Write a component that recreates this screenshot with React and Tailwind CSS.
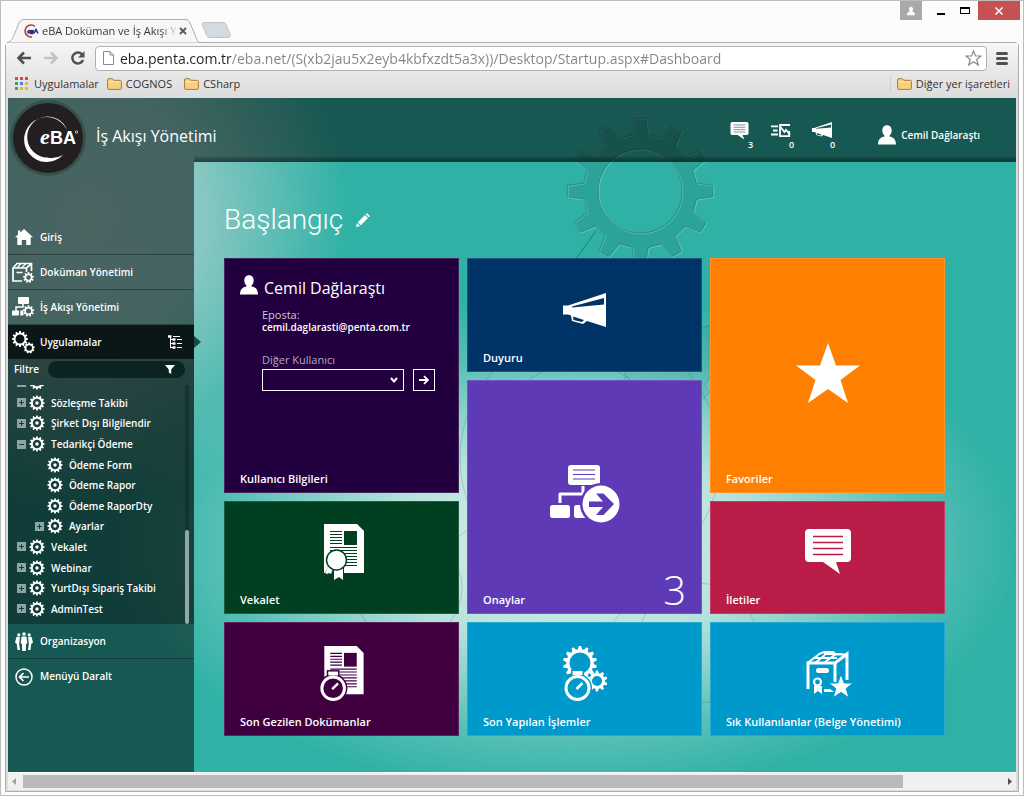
import React from "react";

function gearPath(cx, cy, teeth, outer, inner, phase = 0, top = 0.2, base = 0.32) {
  const step = (Math.PI * 2) / teeth;
  const pt = (r, a) =>
    (cx + r * Math.sin(a)).toFixed(2) + " " + (cy - r * Math.cos(a)).toFixed(2);
  let d = "";
  for (let i = 0; i < teeth; i++) {
    const a = i * step + phase;
    d += (i === 0 ? "M" : "L") + pt(inner, a - step * base);
    d += "L" + pt(outer, a - step * top) + "L" + pt(outer, a + step * top);
    d += "L" + pt(inner, a + step * base);
  }
  return d + "Z";
}

function circlePath(cx, cy, r) {
  return `M${cx - r} ${cy}a${r} ${r} 0 1 0 ${r * 2} 0a${r} ${r} 0 1 0 ${-r * 2} 0Z`;
}

/* ---------- icons ---------- */

function PersonIcon({ className }) {
  return (
    <svg className={className} viewBox="0 0 18 20" fill="currentColor" aria-hidden="true">
      <path d="M9 0.3c2.9 0 4.7 2.2 4.7 5.3 0 2-.9 4-2.2 5.1v.7c2.6.4 6.3 1.5 6.5 8.1H0c.2-6.6 3.9-7.7 6.5-8.1v-.7C5.2 9.6 4.3 7.6 4.3 5.6 4.3 2.5 6.1.3 9 .3Z" />
    </svg>
  );
}

function ChatIcon({ className, line }) {
  return (
    <svg className={className} viewBox="0 0 46 46" aria-hidden="true">
      <path
        fill="currentColor"
        d="M4 0h38a4 4 0 0 1 4 4v25a4 4 0 0 1-4 4H31l4 12-17-12H4a4 4 0 0 1-4-4V4a4 4 0 0 1 4-4Z"
      />
      <path d="M8 7.5h30M8 13.5h30M8 19.5h30M8 25.5h30" stroke={line} strokeWidth="1.5" />
    </svg>
  );
}

function SendIcon({ className }) {
  return (
    <svg className={className} viewBox="0 0 20 14" fill="none" stroke="currentColor" strokeWidth="1.8" aria-hidden="true">
      <path d="M0 2.3h7M2 6.5h4.5M0 10.5h7" />
      <path d="M18.2 7v5.2H9V1h10" />
      <path d="M9.5 3l4 5 1.5-2 4 4.500" />
    </svg>
  );
}

function MegaphoneIcon({ className, hole }) {
  return (
    <svg className={className} viewBox="0 0 43 34" aria-hidden="true">
      <path fill="currentColor" d="M0 12.5h5L43 0v34l-19-6-4 3-11-3-1-5.5-3-1H0Z" />
      <path fill={hole} d="M9 13.5 41 5v6.5L9 14.5ZM10 23.5l11 3.5-2 2-8.5-2Z" />
    </svg>
  );
}

function HomeIcon({ className }) {
  return (
    <svg className={className} viewBox="0 0 18 16" fill="currentColor" aria-hidden="true">
      <path d="M9 0 18 8.2h-2.3V16h-4.5v-5H6.8v5H2.3V8.2H0L3 5.5V1.5h2.3v2Z" />
    </svg>
  );
}

function BoxGearIcon({ className }) {
  return (
    <svg className={className} viewBox="0 0 22 21" fill="none" stroke="currentColor" aria-hidden="true">
      <path strokeWidth="1.7" d="M10 19H1V6l4-4.5h14.5V9M1 6h13.5l5-4.5M14.5 6v4" />
      <path strokeWidth="1.3" d="M5 6l4-4.5M9.5 6l4.5-4.5M4.5 10.5h6" />
      <path fill="currentColor" fillRule="evenodd" stroke="none" d={gearPath(16.5, 15.5, 9, 5.5, 4) + circlePath(16.5, 15.5, 2.3)} />
    </svg>
  );
}

function FlowGearIcon({ className }) {
  return (
    <svg className={className} viewBox="0 0 22 20" fill="currentColor" aria-hidden="true">
      <rect x="6" y="0" width="11" height="7" rx="1" />
      <path d="M11 7v3H4v4" fill="none" stroke="currentColor" strokeWidth="1.5" />
      <rect x="0" y="13.5" width="7" height="5" rx=".8" />
      <rect x="8.3" y="13.5" width="3" height="5" />
      <path fillRule="evenodd" d={gearPath(16.5, 14, 9, 5.8, 4.2) + circlePath(16.5, 14, 2.5)} />
    </svg>
  );
}

function GearsIcon({ className }) {
  return (
    <svg className={className} viewBox="0 0 23 23" fill="currentColor" fillRule="evenodd" aria-hidden="true">
      <path d={gearPath(8, 8, 12, 8, 6.4) + circlePath(8, 8, 4.5)} />
      <path d={gearPath(17.2, 17, 9, 5.5, 4.5) + circlePath(17.2, 17, 2.8)} />
    </svg>
  );
}

function GearIcon({ className }) {
  return (
    <svg className={className} viewBox="0 0 16 16" fill="currentColor" aria-hidden="true">
      <path fillRule="evenodd" d={gearPath(8, 8, 12, 7.6, 6.1) + circlePath(8, 8, 4.2)} />
      <circle cx="8" cy="8" r="1.7" />
    </svg>
  );
}

function TreeIcon({ className }) {
  return (
    <svg className={className} viewBox="0 0 14 14" fill="none" stroke="currentColor" aria-hidden="true">
      <path strokeWidth="1" d="M2.5 2v11M2.5 4.5H5M2.5 8.5H5M2.5 12.5H5" />
      <path strokeWidth="2.4" d="M0 1.5h3.5M4.5 4.5h3M4.5 8.5h3M4.5 12.5h3" />
      <path strokeWidth="1.2" d="M5 1.5h7M9 4.5h5M9 8.5h5M9 12.5h5" />
    </svg>
  );
}

function PeopleIcon({ className }) {
  return (
    <svg className={className} viewBox="0 0 18 19" fill="currentColor" aria-hidden="true">
      <circle cx="9" cy="2" r="1.8" />
      <path d="M6.500 4.500h5l.8 7-1.300.3L10.800 19H7.200L7 11.800l-1.300-.3Z" />
      <circle cx="3.800" cy="2.800" r="1.500" />
      <path d="M1.500 4.800h3.400L4.200 12.500l.8 5.500H2.500L1.800 12 0 10.500Z" />
      <circle cx="14.200" cy="2.800" r="1.500" />
      <path d="M16.500 4.800h-3.400L13.800 12.500l-.8 5.500h2.500l.7-6 1.800-1.500Z" />
    </svg>
  );
}

function BackCircleIcon({ className }) {
  return (
    <svg className={className} viewBox="0 0 18 18" fill="none" stroke="currentColor" strokeWidth="1.5" aria-hidden="true">
      <circle cx="9" cy="9" r="8" />
      <path strokeWidth="1.7" d="M14 9H5M8.5 5 4.5 9l4 4" />
    </svg>
  );
}

function Stopwatch({ x, y, r, ring }) {
  return (
    <g>
      <circle cx={x} cy={y} r={r + 1.5} fill={ring} />
      <rect x={x - 6.5} y={y - r - 5.5} width="13" height="6" fill={ring} />
      <rect x={x - 5} y={y - r - 4} width="10" height="4" fill="white" />
      <circle cx={x} cy={y} r={r - 1.5} fill={ring} stroke="white" strokeWidth="3" />
      <path d={`M${x - 1} ${y + 1}l6-6`} stroke="white" strokeWidth="2.5" />
    </g>
  );
}

function Paper({ bg }) {
  return (
    <g>
      <path fill="white" d="M4 0h33l7 7v42H4Z" />
      <path stroke={bg} strokeWidth="1.2" d="M10 7.5h12M10 10.5h12M10 13.5h12M10 16.5h12M10 19.5h12M10 23.5h27M10 26.5h27M10 29.5h27M10 32.5h27M10 35.5h27M10 38.5h27M10 41.5h27" />
      <rect x="24" y="7" width="13" height="14" fill={bg} />
    </g>
  );
}

function CertificateIcon() {
  const bg = "#004020";
  return (
    <svg className="h-14 w-11" viewBox="0 0 44 56" aria-hidden="true">
      <Paper bg={bg} />
      <path fill={bg} d="M4 50l6-10h14v10Z" />
      <path fill="white" d="M5 49l4-8 4 3-2 6-2-1-2 1ZM14 42h9v14l-4-3-5 3Z" />
      <circle cx="16.5" cy="36" r="10" fill="white" stroke={bg} strokeWidth="1.5" />
    </svg>
  );
}

function RecentDocIcon() {
  return (
    <svg className="h-14 w-11" viewBox="0 0 44 57" aria-hidden="true">
      <Paper bg="#400040" />
      <Stopwatch x={13} y={43} r={13} ring="#400040" />
    </svg>
  );
}

function RecentActionsIcon() {
  return (
    <svg className="h-14 w-11" viewBox="0 0 44 56" aria-hidden="true">
      <path fill="white" fillRule="evenodd" d={gearPath(17, 17, 14, 17, 13.8, 0, 0.16, 0.34) + circlePath(17, 17, 10.5)} />
      <path fill="white" fillRule="evenodd" d={gearPath(34, 35, 10, 10.5, 8, 0, 0.16, 0.34) + circlePath(34, 35, 5)} />
      <Stopwatch x={14.5} y={42} r={13} ring="#0099cc" />
    </svg>
  );
}

function ArchiveStarIcon() {
  return (
    <svg className="h-12 w-12" viewBox="0 0 48 48" fill="none" stroke="white" aria-hidden="true">
      <path strokeWidth="3" d="M4 39V13h27v19M31 13 43 4v26" />
      <path strokeWidth="2" d="M3.5 13 14 5M11 13l10-8M21 12l11-8M14 4.5l6-2.5h9l3 2.5h11" />
      <path strokeWidth="2" d="M9 8h24M20 4h18" />
      <rect x="12" y="18" width="13" height="5" rx="2.5" fill="white" stroke="none" />
      <circle cx="13.5" cy="32" r="3.5" strokeWidth="2.2" />
      <path fill="white" stroke="none" d="M10 36h8v8l-4-3-4 3ZM20 39h6l4 3h-10Z" />
      <path fill="white" stroke="#0099cc" strokeWidth="1" d="m37 24 3.2 9h9l-7 5.6 2.8 9.2-8-5.4-8 5.4 2.8-9.2-7-5.6h9Z" />
    </svg>
  );
}

function ApprovalIcon() {
  const bg = "#5f3ab7";
  return (
    <svg className="h-[60px] w-[70px]" viewBox="0 0 70 60" aria-hidden="true">
      <rect x="18" y="1" width="32" height="20" rx="3" fill="white" />
      <path d="M23 6h22M23 10.5h22M23 15h22" stroke={bg} strokeWidth="1.2" />
      <path d="M33 22v8H10v9" fill="none" stroke="white" strokeWidth="3" strokeLinejoin="round" />
      <rect x="0" y="41" width="20" height="13" rx="2.5" fill="white" />
      <rect x="24" y="41" width="20" height="13" rx="2.5" fill="white" />
      <circle cx="51" cy="40" r="21" fill={bg} />
      <circle cx="51" cy="40" r="18.5" fill="white" />
      <path fill={bg} d="M39 37.5h14l-7-8h7.5L64 40 53.5 51H46l7-8H39Z" />
    </svg>
  );
}

function StarIcon() {
  return (
    <svg className="h-[60px] w-16" viewBox="0 0 64 60" fill="white" aria-hidden="true">
      <path d="m32 0 8 22.5h24L44.5 37 52 60 32 46 12 60l7.5-23L0 22.5h24Z" />
    </svg>
  );
}

function FolderIcon() {
  return (
    <svg className="h-3 w-[15px]" viewBox="0 0 15 12" aria-hidden="true">
      <path d="M.6 2A1.2 1.2 0 0 1 1.8.7h3.6l1.4 1.6h6.4a1.2 1.2 0 0 1 1.2 1.2v6.7a1.2 1.2 0 0 1-1.2 1.2H1.8A1.2 1.2 0 0 1 .6 10.2Z" fill="#f9cf7e" stroke="#a8793a" />
      <path d="M1.2 3.8h12.6" stroke="#fde9bd" />
    </svg>
  );
}

/* ---------- browser chrome ---------- */

function TabStrip() {
  return (
    <div className="flex h-[41px] items-end justify-between">
      <div className="flex items-end">
        <div className="relative -mb-px ml-1.5 flex h-6 w-[194px] items-center gap-[3px] pl-4 pr-3.5">
          <svg className="absolute inset-0 h-full w-full" viewBox="0 0 194 24" preserveAspectRatio="none" aria-hidden="true">
            <path d="M0 23.5C5 22 5 20 7 16L12 4C13.5 1 14.5.5 17 .5H178C181 .5 182 1.5 183 4L189 18C190.5 22 191 23.5 194 23.5" fill="#f6f6f6" stroke="#adadad" />
          </svg>
          <svg className="relative h-4 w-4 shrink-0" viewBox="0 0 16 16" fill="none" aria-hidden="true">
            <path d="M12 3.5A6 6 0 1 0 9 14" stroke="#c0392b" strokeWidth="1.5" />
            <path d="M4.5 9.5c1-2.5 3-2.5 3-1s-3 1.5-2 2M9 7l-1 3.5h1.5L10.5 7M11 10.5 13 6.5l2 4" stroke="#1d2f86" strokeWidth="1.5" />
          </svg>
          <span className="relative flex-1 whitespace-nowrap bg-[linear-gradient(90deg,#333_88%,#ddd)] bg-clip-text text-[11px] leading-4 text-transparent">
            eBA Doküman ve İş Akışı Y
          </span>
          <button type="button" aria-label="Sekmeyi kapat" className="relative shrink-0">
            <svg className="h-2 w-2" viewBox="0 0 8 8" stroke="#555" strokeWidth="1.8" aria-hidden="true">
              <path d="M1 1l6 6M7 1 1 7" />
            </svg>
          </button>
        </div>
        <button type="button" aria-label="Yeni sekme" className="mb-1">
          <svg className="h-4 w-[30px]" viewBox="0 0 30 16" aria-hidden="true">
            <path d="M1 2Q1 .5 3 .5H22Q24 .5 25 2.5L29 12Q30 15.5 27 15.5H9Q6.5 15.5 5.5 13Z" fill="#d5d9e0" stroke="#bfc2c8" />
          </svg>
        </button>
      </div>
      <div className="mr-[3px] flex h-[19px] items-stretch self-start">
        <button type="button" aria-label="Profil" className="mr-2 flex w-[22px] items-center justify-center bg-[#a9a9a9] text-white">
          <PersonIcon className="h-2.5 w-2" />
        </button>
        <button type="button" aria-label="Simge durumuna küçült" className="flex w-[22px] items-center justify-center">
          <span className="mt-1.5 h-0.5 w-2 bg-black" />
        </button>
        <button type="button" aria-label="Ekranı kapla" className="flex w-[26px] items-center justify-center">
          <span className="h-[7px] w-2.5 border border-t-2 border-black" />
        </button>
        <button type="button" aria-label="Kapat" className="flex w-[42px] items-center justify-center bg-[#c75050]">
          <svg className="h-2 w-2" viewBox="0 0 8 8" stroke="white" strokeWidth="1.5" aria-hidden="true">
            <path d="M.5.5l7 7M7.5.5l-7 7" />
          </svg>
        </button>
      </div>
    </div>
  );
}

function AddressBar() {
  return (
    <div className="flex h-[30px] items-center pl-[10px] pr-[10px]">
      <button type="button" aria-label="Geri">
        <svg className="h-3.5 w-4" viewBox="0 0 16 14" fill="none" stroke="#505050" strokeWidth="2.6" aria-hidden="true">
          <path d="M15 7H3M8 1.5 2.5 7 8 12.5" />
        </svg>
      </button>
      <button type="button" aria-label="İleri" className="ml-[11px]">
        <svg className="h-3.5 w-4" viewBox="0 0 16 14" fill="none" stroke="#c4c4c4" strokeWidth="2.6" aria-hidden="true">
          <path d="M1 7h12M8 1.5 13.5 7 8 12.5" />
        </svg>
      </button>
      <button type="button" aria-label="Yenile" className="ml-[11px]">
        <svg className="h-3.5 w-4" viewBox="0 0 16 14" aria-hidden="true">
          <path d="M12 3.3A5.5 5.5 0 1 0 13 9" fill="none" stroke="#505050" strokeWidth="2.5" />
          <path d="M14.5 0v6.5H8Z" fill="#505050" />
        </svg>
      </button>
      <div className="ml-[9px] flex h-[25px] flex-1 items-center rounded-sm border border-[#b0b0b0] bg-white pl-[7px] pr-1">
        <svg className="h-3.5 w-[11px]" viewBox="0 0 11 14" fill="white" stroke="#8a8a8a" aria-hidden="true">
          <path d="M.5.5h6.5l3.5 3.5v9.5H.5ZM7 .5V4h3.5" />
        </svg>
        <input
          type="text"
          aria-label="Adres çubuğu"
          defaultValue="eba.penta.com.tr/eba.net/(S(xb2jau5x2eyb4kbfxzdt5a3x))/Desktop/Startup.aspx#Dashboard"
          className="ml-1.5 h-[22px] min-w-0 flex-1 bg-[linear-gradient(90deg,#222_111px,#838383_111px)] bg-clip-text text-sm text-transparent outline-none"
        />
        <button type="button" aria-label="Yer işareti ekle">
          <svg className="h-4 w-[17px]" viewBox="0 0 17 16" fill="white" stroke="#8a8a8a" strokeWidth="1.2" aria-hidden="true">
            <path d="m8.5 1 2 5h5.5l-4.3 3.5 1.6 5.5-4.8-3.3L3.7 15l1.6-5.5L1 6h5.5Z" />
          </svg>
        </button>
      </div>
      <button type="button" aria-label="Menü" className="ml-[9px] flex flex-col gap-0.5">
        <span className="h-[3px] w-3 rounded-sm bg-[#505050]" />
        <span className="h-[3px] w-3 rounded-sm bg-[#505050]" />
        <span className="h-[3px] w-3 rounded-sm bg-[#505050]" />
      </button>
    </div>
  );
}

function AppsGrid() {
  const colors = ["#e2453c", "#e2453c", "#e2453c", "#3aa757", "#4a80f0", "#f2b90f", "#3aa757", "#f2b90f", "#f2b90f"];
  return (
    <svg className="h-[13px] w-[13px]" viewBox="0 0 13 13" aria-hidden="true">
      {colors.map((c, i) => (
        <rect key={i} x={(i % 3) * 5} y={Math.floor(i / 3) * 5} width="3" height="3" fill={c} />
      ))}
    </svg>
  );
}

function BookmarksBar() {
  return (
    <nav className="flex h-[25px] items-center pb-1 pl-[9px] pr-2 text-[11px] leading-4 text-[#333]">
      <a href="#apps" className="flex items-center gap-1.5"><AppsGrid />Uygulamalar</a>
      <a href="#cognos" className="ml-2 flex items-center gap-1"><FolderIcon />COGNOS</a>
      <a href="#csharp" className="ml-3 flex items-center gap-1"><FolderIcon />CSharp</a>
      <a href="#other" className="ml-auto flex items-center gap-1 border-l border-[#cfcfcf] pl-1.5"><FolderIcon />Diğer yer işaretleri</a>
    </nav>
  );
}

/* ---------- application ---------- */

function Backdrop() {
  const gear = gearPath(632, 93, 12, 73, 57, 0, 0.15, 0.27) + circlePath(632, 93, 42);
  return (
    <svg className="absolute left-0 top-0 h-[675px] w-[1008px]" viewBox="0 0 1008 675" fill="none" aria-hidden="true">
      <g>
        <path d={gear} transform="translate(1 1)" stroke="white" strokeOpacity=".25" />
        <path d={gear} fill="black" fillRule="evenodd" fillOpacity=".08" stroke="black" strokeOpacity=".15" />
        <path d="M588 133 560 172" stroke="black" strokeOpacity=".3" />
      </g>
      <g stroke="black" strokeOpacity=".14">
        <path d={gearPath(660, 260, 14, 54, 46, 0.1)} fill="black" fillOpacity=".04" />
        <circle cx="582" cy="360" r="130" />
        <circle cx="572" cy="350" r="85" />
        <circle cx="400" cy="490" r="54" />
        <circle cx="690" cy="545" r="60" />
        <path d="M440 447l90-70M600 530l60-70" />
      </g>
    </svg>
  );
}

function Logo() {
  return (
    <div className="flex h-[76px] w-[76px] shrink-0 items-center justify-center rounded-full border-[3px] border-[#33524d] bg-[#231f20]">
      <svg className="h-[70px] w-[70px]" viewBox="0 0 70 70" aria-label="eBA" role="img">
        <path d="M54 27A22.5 22.5 0 1 0 50 52 22 22 0 0 1 34 54.500 20.500 20.500 0 1 1 54 27Z" fill="white" />
        <text x="27" y="41" fill="white" fontFamily="Liberation Serif, serif" fontStyle="italic" fontWeight="700" fontSize="22">e</text>
        <text x="37" y="41" fill="white" fontFamily="Liberation Sans, sans-serif" fontWeight="700" fontSize="18">BA</text>
        <circle cx="63.5" cy="29" r="1.2" fill="none" stroke="white" strokeWidth=".7" />
      </svg>
    </div>
  );
}

function Counter({ label, count, children }) {
  return (
    <button type="button" aria-label={label} className="relative flex h-[27px] w-[23px] items-start">
      {children}
      <span className="absolute bottom-0 right-0 text-[9px] font-semibold leading-[9px]">{count}</span>
    </button>
  );
}

function Header() {
  return (
    <header className="relative z-10 flex h-16 text-white">
      <div className="relative z-10 flex w-[186px] shrink-0 bg-black/50 pl-0.5 pt-0.5">
        <Logo />
        <h1 className="ml-[10px] mt-6 whitespace-nowrap text-base leading-6">İş Akışı Yönetimi</h1>
      </div>
      <div className="flex flex-1 items-start justify-end bg-black/50 bg-[linear-gradient(to_top,rgba(0,0,0,0.35),rgba(0,0,0,0.2)_4px,transparent_6px)] pr-9 pt-6">
        <div className="flex gap-[18px]">
          <Counter label="İletiler" count="3"><ChatIcon className="h-[18px] w-[19px]" line="#1a5852" /></Counter>
          <Counter label="Gönderiler" count="0"><SendIcon className="mt-0.5 h-3.5 w-5" /></Counter>
          <Counter label="Duyurular" count="0"><MegaphoneIcon className="h-4 w-5" hole="#1a5852" /></Counter>
        </div>
        <button type="button" className="ml-[43px] mt-[3px] flex h-5 items-center gap-[5px] text-[10px] font-semibold">
          <PersonIcon className="h-5 w-[18px]" />
          Cemil Dağlaraştı
        </button>
      </div>
    </header>
  );
}

function NavLink({ icon, label, href }) {
  return (
    <a href={href} className="flex h-[35px] items-center border-b border-black/30 text-[10px] font-semibold">
      <span className="flex w-8 items-center pl-1">{icon}</span>
      {label}
    </a>
  );
}

const tree = [
  { label: "", level: 0, expand: "-" },
  { label: "Sözleşme Takibi", level: 0, expand: "+" },
  { label: "Şirket Dışı Bilgilendir", level: 0, expand: "+" },
  { label: "Tedarikçi Ödeme", level: 0, expand: "-" },
  { label: "Ödeme Form", level: 1 },
  { label: "Ödeme Rapor", level: 1 },
  { label: "Ödeme RaporDty", level: 1 },
  { label: "Ayarlar", level: 1, expand: "+" },
  { label: "Vekalet", level: 0, expand: "+" },
  { label: "Webinar", level: 0, expand: "+" },
  { label: "YurtDışı Sipariş Takibi", level: 0, expand: "+" },
  { label: "AdminTest", level: 0, expand: "+" },
];

function ExpandBox({ kind }) {
  return (
    <svg className="h-[9px] w-[9px]" viewBox="0 0 9 9" aria-hidden="true">
      <rect width="9" height="9" fill="#8da5a2" />
      <path d={kind === "-" ? "M2 4.5h5" : "M2 4.5h5M4.5 2v5"} stroke="#123a36" />
    </svg>
  );
}

function Sidebar() {
  return (
    <aside className="w-[186px] shrink-0 bg-black/50 pt-[58px] text-white">
      <nav>
        <NavLink href="#giris" label="Giriş" icon={<HomeIcon className="ml-[3px] h-4 w-[18px]" />} />
        <NavLink href="#dokuman" label="Doküman Yönetimi" icon={<BoxGearIcon className="h-[21px] w-[22px]" />} />
        <NavLink href="#akis" label="İş Akışı Yönetimi" icon={<FlowGearIcon className="h-5 w-[22px]" />} />
        <a href="#uygulamalar" className="relative flex h-[34px] items-center bg-[#0b1716] text-[10px] font-semibold">
          <span className="flex w-8 items-center pl-1"><GearsIcon className="h-[23px] w-[23px]" /></span>
          Uygulamalar
          <TreeIcon className="ml-auto mr-3 h-3.5 w-3.5" />
          <svg className="absolute -right-[7px] top-[11px] h-3 w-[7px]" viewBox="0 0 7 12" aria-hidden="true">
            <path d="M0 0l7 6-7 6Z" fill="#174b47" />
          </svg>
        </a>
        <div className="bg-black/30">
          <label className="flex h-[26px] items-start justify-between pl-1.5 pr-[9px] pt-0.5 text-[10px] font-semibold leading-[17px]">
            Filtre
            <span className="flex h-[17px] w-[137px] items-center rounded-full bg-[#0c2421] pr-2.5">
              <input type="text" className="h-[17px] w-full min-w-0 bg-transparent pl-2 outline-none" />
              <svg className="h-[9px] w-2.5 shrink-0" viewBox="0 0 10 9" fill="white" aria-hidden="true">
                <path d="M0 0h10L6.2 4.5V9L3.8 7.5v-3Z" />
              </svg>
            </span>
          </label>
          <div className="flex h-[239px] overflow-hidden">
            <div className="flex h-full flex-1 flex-col justify-end overflow-hidden pb-[5px]">
              <ul className="grid h-[247px] shrink-0 auto-rows-fr">
                {tree.map((node, i) => (
                  <li key={i} className={node.level ? "flex items-center pl-[26px]" : "flex items-center pl-2"}>
                    <span className="flex w-[13px] shrink-0 items-center pl-px">
                      {node.expand && <ExpandBox kind={node.expand} />}
                    </span>
                    <GearIcon className="mr-1.5 h-4 w-4 shrink-0" />
                    {node.label && (
                      <a href={"#app" + i} className="whitespace-nowrap text-[10px] font-semibold leading-4">{node.label}</a>
                    )}
                  </li>
                ))}
              </ul>
            </div>
            <div className="mr-[5px] flex w-1 items-end bg-black/20">
              <div className="h-[94px] w-1 rounded-sm bg-[#90a9a6]" />
            </div>
          </div>
        </div>
        <NavLink href="#organizasyon" label="Organizasyon" icon={<PeopleIcon className="ml-[3px] h-[19px] w-[18px]" />} />
        <button type="button" className="flex h-[35px] w-full items-center text-[10px] font-semibold">
          <span className="flex w-8 items-center pl-[7px]"><BackCircleIcon className="h-[18px] w-[18px]" /></span>
          Menüyü Daralt
        </button>
      </nav>
    </aside>
  );
}

function Tile({ href, label, className, children, badge, tall }) {
  return (
    <a href={href} className={"flex flex-col border border-white/15 px-[15px] text-[11px] font-semibold text-white " + (tall ? "row-span-2 pt-4 " : "pt-[11px] ") + className}>
      <span className="flex flex-1 items-center justify-center">{children}</span>
      <span className="flex h-[22px] items-end justify-between">
        <span className="pb-[5px] leading-4">{label}</span>
        {badge && <span className="text-[40px] font-light leading-[46px]">{badge}</span>}
      </span>
    </a>
  );
}

function UserTile() {
  return (
    <section className="row-span-2 flex flex-col border border-white/15 bg-[#220040] px-[15px] text-white">
      <div className="mt-4 flex items-start gap-1.5">
        <PersonIcon className="h-5 w-[18px]" />
        <h3 className="mt-px text-base leading-6">Cemil Dağlaraştı</h3>
      </div>
      <div className="ml-[22px] mt-2 text-[11px] leading-[13px]">
        <p className="text-[#cfc6dc]">Eposta:</p>
        <p className="text-[10px] font-semibold leading-[13px]">cemil.daglarasti@penta.com.tr</p>
        <label htmlFor="other-user" className="mt-[19px] block text-[#b3a6c6]">Diğer Kullanıcı</label>
        <div className="mt-[3px] flex gap-[9px]">
          <div className="relative">
            <select id="other-user" className="h-[22px] w-[142px] appearance-none border border-white bg-transparent">
              <option value=""></option>
            </select>
            <svg className="pointer-events-none absolute right-1.5 top-2 h-1.5 w-2" viewBox="0 0 8 6" fill="none" stroke="white" strokeWidth="2" aria-hidden="true">
              <path d="M1 1l3 3.5L7 1" />
            </svg>
          </div>
          <button type="button" aria-label="Git" className="flex h-[22px] w-[22px] items-center justify-center border border-white">
            <svg className="h-2.5 w-2.5" viewBox="0 0 10 10" fill="none" stroke="white" strokeWidth="1.8" aria-hidden="true">
              <path d="M0 5h8.5M5 1.2 9 5 5 8.8" />
            </svg>
          </button>
        </div>
      </div>
      <p className="mt-auto pb-[5px] text-[11px] font-semibold leading-4">Kullanıcı Bilgileri</p>
    </section>
  );
}

function Dashboard() {
  return (
    <main className="flex-1 pb-[35px] pl-[30px] pr-[71px] pt-[38px] text-white">
      <div className="flex h-10 items-center gap-[13px]">
        <h2 className="font-['Roboto',sans-serif] text-[28px] font-light leading-10">Başlangıç</h2>
        <button type="button" aria-label="Düzenle">
          <svg className="h-3.5 w-3.5" viewBox="0 0 14 14" fill="white" aria-hidden="true">
            <path d="M0 14l1-4 3 3ZM1.8 9.2 9 2l3 3-7.2 7.2ZM9.8 1.2 11 0l3 3-1.2 1.2Z" />
          </svg>
        </button>
      </div>
      <div className="mt-[18px] grid grid-flow-col grid-cols-3 grid-rows-[114px_113px_113px_114px] gap-2">
        <UserTile />
        <Tile href="#vekalet" label="Vekalet" className="bg-[#004020]"><CertificateIcon /></Tile>
        <Tile href="#son-dokumanlar" label="Son Gezilen Dokümanlar" className="bg-[#400040]"><RecentDocIcon /></Tile>
        <Tile href="#duyuru" label="Duyuru" className="bg-[#003366]"><MegaphoneIcon className="h-[34px] w-[43px]" hole="#003366" /></Tile>
        <Tile href="#onaylar" label="Onaylar" badge="3" tall className="bg-[#5f3ab7]"><ApprovalIcon /></Tile>
        <Tile href="#son-islemler" label="Son Yapılan İşlemler" className="bg-[#0099cc]"><RecentActionsIcon /></Tile>
        <Tile href="#favoriler" label="Favoriler" tall className="bg-[#ff8000]"><StarIcon /></Tile>
        <Tile href="#iletiler" label="İletiler" className="bg-[#b91d47]"><ChatIcon className="h-[46px] w-[46px]" line="#b91d47" /></Tile>
        <Tile href="#sik-kullanilanlar" label="Sık Kullanılanlar (Belge Yönetimi)" className="bg-[#0099cc]"><ArchiveStarIcon /></Tile>
      </div>
    </main>
  );
}

function HorizontalScrollbar() {
  return (
    <div className="flex h-[18px] items-center border-t border-white bg-[#f0f0f0] px-1">
      <button type="button" aria-label="Sola kaydır" className="w-[11px]">
        <svg className="h-[7px] w-1" viewBox="0 0 4 7" fill="#a0a0a0" aria-hidden="true"><path d="M4 0v7L0 3.5Z" /></svg>
      </button>
      <div className="flex-1"><div className="h-[13px] w-[90%] bg-[#bababa]" /></div>
      <button type="button" aria-label="Sağa kaydır" className="flex w-[11px] justify-end">
        <svg className="h-[7px] w-1" viewBox="0 0 4 7" fill="#505050" aria-hidden="true"><path d="M0 0v7l4-3.5Z" /></svg>
      </button>
    </div>
  );
}

export default function App() {
  return (
    <div className="flex min-h-screen flex-col border border-[#bdbdbd] bg-[#fcfcfc] pb-[3px] font-['Open_Sans','Noto_Sans',sans-serif]">
      <TabStrip />
      <div className="mx-1 flex flex-1 flex-col rounded-t border border-[#adadad] bg-[#dedede] pb-px">
        <div className="bg-linear-to-b from-[#f6f6f6] to-[#dcdcdc]">
          <AddressBar />
          <BookmarksBar />
        </div>
        <div className="mx-0.5 flex flex-1 flex-col">
          <div className="relative flex flex-1 flex-col overflow-hidden bg-[#30b1a5] bg-[radial-gradient(ellipse_260px_290px_at_80px_120px,rgba(215,215,215,0.6),rgba(220,222,222,0.5)_45%,rgba(225,225,225,0)),radial-gradient(ellipse_450px_250px_at_562px_447px,rgba(230,243,240,0.95),rgba(230,243,240,0.75)_40%,rgba(230,246,243,0.2)_78%,rgba(230,246,243,0))]">
            <Backdrop />
            <Header />
            <div className="relative flex flex-1">
              <Sidebar />
              <Dashboard />
            </div>
          </div>
          <HorizontalScrollbar />
        </div>
      </div>
    </div>
  );
}
